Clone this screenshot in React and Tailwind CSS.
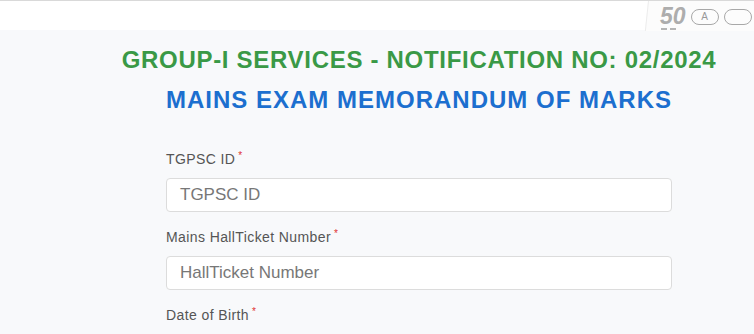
export default function App() {
  const fields = [
    { label: 'TGPSC ID', placeholder: 'TGPSC ID' },
    { label: 'Mains HallTicket Number', placeholder: 'HallTicket Number' },
    { label: 'Date of Birth', placeholder: '' },
  ];

  return (
    <div className="w-[754px] h-[334px] overflow-hidden bg-[#f8f9fb] font-['Liberation_Sans',Arial,sans-serif]">
      {/* scanned strip at the top */}
      <div className="relative h-[30px] bg-white border-t border-[#d9d9d9]">
        <div className="absolute left-[648px] top-0 h-[30px] w-[120px] border-l border-[#ececec] bg-[#fcfcfc] -skew-x-6 origin-top-left"></div>
        <div className="absolute left-[660px] top-[4px] flex items-center gap-[5px] text-[#adadad]">
          <span className="text-[23px] font-semibold italic leading-none">50</span>
          <span className="flex h-[16px] w-[28px] shrink-0 items-center justify-center rounded-full border-[1.5px] border-[#a8a8a8] text-[10px] text-[#999]">A</span>
          <span className="h-[16px] w-[28px] shrink-0 rounded-full border-[1.5px] border-[#a8a8a8]"></span>
        </div>
        <div className="absolute left-[661px] top-[27px] flex gap-[3px]">
          <span className="h-[2px] w-[6px] bg-[#b5b5b5]"></span>
          <span className="h-[2px] w-[6px] bg-[#b5b5b5]"></span>
        </div>
      </div>

      <div className="ml-[84px] w-[670px]">
        <h1 className="mt-[17px] text-center text-[24px] font-bold leading-[26px] tracking-[0.7px] text-[#3a9946]">
          GROUP-I SERVICES - NOTIFICATION NO: 02/2024
        </h1>
        <h2 className="mt-[14px] text-center text-[24px] font-bold leading-[26px] tracking-[1px] text-[#1c6fcf]">
          MAINS EXAM MEMORANDUM OF MARKS
        </h2>

        <div className="mx-auto mt-[37px] w-[506px]">
          {fields.map((f) => (
            <div key={f.label} className="mb-[16px]">
              <label className="block text-[14px] leading-[18px] tracking-[0.4px] text-[#555]">
                {f.label}
                <sup className="ml-[3px] text-[10px] text-[#e03131]">*</sup>
              </label>
              <div className="mt-[10px] flex h-[34px] items-center rounded-[4px] border border-[#dcdcdc] bg-white px-[13px] text-[17px] text-[#777]">
                {f.placeholder}
              </div>
            </div>
          ))}
        </div>
      </div>
    </div>
  );
}
